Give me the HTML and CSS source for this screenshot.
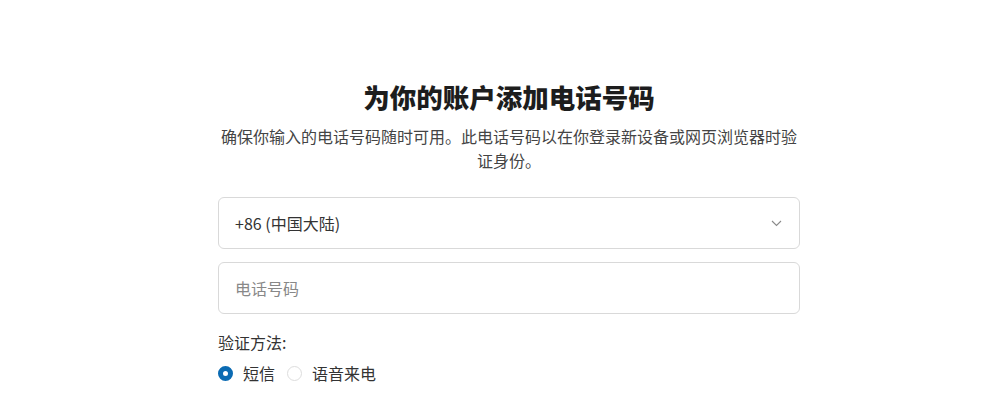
FILE: index.html
```html
<!DOCTYPE html>
<html lang="zh-CN">
<head>
  <meta charset="UTF-8" />
  <meta name="viewport" content="width=device-width, initial-scale=1.0"/>
  <title>添加电话号码</title>
  <link rel="stylesheet" href="styles.css">
</head>
<body>
  <div class="panel">
    <h1>为你的账户添加电话号码</h1>
    <p class="intro">确保你输入的电话号码随时可用。此电话号码以在你登录新设备或网页浏览器时验证身份。</p>

    <div class="field select">
      <span>+86 (中国大陆)</span>
      <svg class="chevron" width="11" height="7" viewBox="0 0 11 7">
        <path d="M1 1 L5.5 5.5 L10 1" fill="none" stroke="#8a8a8a" stroke-width="1.1"/>
      </svg>
    </div>

    <div class="field">
      <span class="placeholder">电话号码</span>
    </div>

    <div class="method">
      <div class="method-label">验证方法:</div>
      <div class="options">
        <label class="option"><span class="radio checked"></span>短信</label>
        <label class="option"><span class="radio"></span>语音来电</label>
      </div>
    </div>
  </div>
</body>
</html>
```

FILE: styles.css
```css
body {
  margin: 0;
  background: #fff;
  font-family: "Noto Sans CJK SC", "Noto Sans", sans-serif;
  color: #333;
}

.panel {
  width: 582px;
  margin-left: 218px;
  padding-top: 75px;
}

h1 {
  margin: 0;
  text-align: center;
  font-size: 26.5px;
  font-weight: 900;
  line-height: 44px;
  color: #1d1d1d;
}

.intro {
  margin: 5px -2px 0;
  text-align: center;
  font-size: 16px;
  line-height: 24px;
  color: #444;
}

.field {
  display: flex;
  align-items: center;
  justify-content: space-between;
  height: 50px;
  margin-top: 13px;
  padding: 0 16px;
  border: 1px solid #d9d9d9;
  border-radius: 6px;
  font-size: 16px;
  color: #333;
}

.field.select {
  margin-top: 25px;
  padding-right: 17px;
}

.placeholder {
  color: #888;
}

.method {
  margin-top: 16px;
  font-size: 16px;
  color: #333;
}

.method-label {
  line-height: 24px;
}

.options {
  display: flex;
  gap: 12px;
  margin-top: 7px;
}

.option {
  display: flex;
  align-items: center;
  gap: 10px;
  line-height: 24px;
}

.radio {
  width: 15px;
  height: 15px;
  border: 1px solid #ddd;
  border-radius: 50%;
  box-sizing: border-box;
}

.radio.checked {
  border: 5px solid #0b6bb3;
  background: #fff;
}
```
